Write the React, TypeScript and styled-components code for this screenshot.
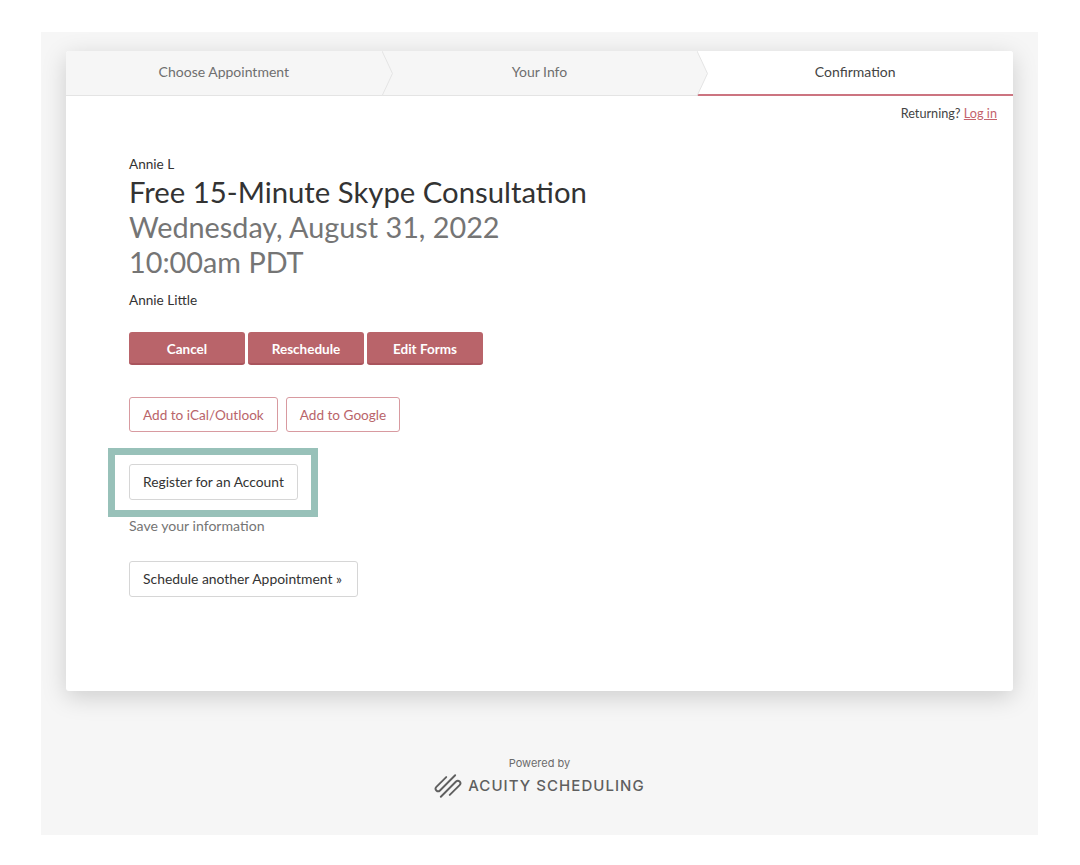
import React from "react";
import styled, { createGlobalStyle } from "styled-components";

const Global = createGlobalStyle`
  html, body { margin: 0; padding: 0; background: #fff; }
  body { font-family: "Lato", "Noto Sans", sans-serif; color: #333; }
`;
const Page = styled.div`
  height: 865px; box-sizing: border-box; padding: 32px 42px 30px 41px; overflow: hidden;
`;
const Panel = styled.main`
  height: 803px; box-sizing: border-box; background: #f6f6f6; padding: 19px 25px 0;
  display: flex; flex-direction: column;
`;
const Card = styled.section`
  height: 640px; background: #fff; border-radius: 3px; box-shadow: 0 6px 24px rgba(0,0,0,.17);
  display: flex; flex-direction: column; flex: none;
`;
const Tabs = styled.nav`
  display: grid; grid-template-columns: repeat(3, 1fr); height: 45px; flex: none;
`;
const Tab = styled.div<{ $active?: boolean }>`
  position: relative; display: flex; align-items: center; justify-content: center;
  font-size: 14px; padding-bottom: ${p => (p.$active ? "3px" : "4px")}; box-sizing: border-box;
  background: ${p => (p.$active ? "#fff" : "#f6f6f6")};
  color: ${p => (p.$active ? "#444" : "#6f6f6f")};
  border-bottom: ${p => (p.$active ? "2px solid #cc7480" : "1px solid #e4e4e4")};
  border-radius: ${p => (p.$active ? "0 3px 0 0" : "0")};
  &:first-child { border-radius: 3px 0 0 0; }
`;
const Chevron = styled.svg`
  position: absolute; right: -11px; top: 0; width: 11px; height: 45px; z-index: 1;
`;
const Returning = styled.div`
  align-self: flex-end; margin: 9px 16px 0 0; font-size: 12.7px; line-height: 16px; color: #444;
`;
const LogIn = styled.a`
  color: #c4636d; text-decoration: underline;
`;
const Content = styled.div`
  padding: 35px 0 0 63px; display: flex; flex-direction: column; align-items: flex-start;
`;
const Small = styled.div`
  font-size: 13.6px; line-height: 16px; color: #333;
`;
const Title = styled.h1`
  margin: 2px 0 0; font-size: 29.3px; line-height: 36px; font-weight: 400; color: #333;
`;
const Subtitle = styled.div`
  font-size: 28.8px; line-height: 35px; color: #757575;
`;
const Owner = styled(Small)`
  margin-top: 12px;
`;
const Row = styled.div<{ $gap: number; $top: number }>`
  display: flex; gap: ${p => p.$gap}px; margin-top: ${p => p.$top}px;
`;
const Solid = styled.button`
  min-width: 116px; height: 33px; padding: 3px 23px 0; box-sizing: border-box; background: #b9646a; color: #fff;
  border: 0; border-bottom: 2px solid #a9545c; border-radius: 3px; font: 700 13.5px "Lato", sans-serif;
`;
const Outline = styled.button`
  height: 35px; padding: 0 13px; box-sizing: border-box; background: #fff; color: #b9646a;
  border: 1px solid #d89aa0; border-radius: 3px; font: 400 13.6px "Lato", sans-serif;
`;
const Plain = styled.button`
  height: 36px; padding: 0 13px 2px; box-sizing: border-box; background: #fff; color: #333;
  border: 1px solid #d6d6d6; border-radius: 3px; font: 400 13.8px "Lato", sans-serif;
`;
const RegisterWrap = styled.div`
  position: relative; margin-top: 32px;
`;
const Highlight = styled.div`
  position: absolute; left: -21px; top: -16px; width: 210px; height: 69px; box-sizing: border-box;
  border: 7px solid #98c1b9; pointer-events: none;
`;
const Hint = styled.div`
  margin-top: 17px; font-size: 14.1px; line-height: 17px; color: #757575;
`;
const Another = styled(Plain)`
  margin-top: 27px; padding: 0 15px 2px 13px; font-size: 13.9px;
`;
const Footer = styled.footer`
  margin-top: 65px; display: flex; flex-direction: column; align-items: center; color: #666;
  font-family: "Inter", "Liberation Sans", sans-serif;
`;
const Powered = styled.div`
  font-size: 11px; line-height: 14px; color: #6b6b6b;
`;
const Brand = styled.div`
  display: flex; align-items: center; gap: 6px; margin-top: 4px;
  font-size: 15px; line-height: 22px; letter-spacing: 1.05px; font-weight: 500; color: #5f5f5f;
`;

const ChevronMark = () => (
  <Chevron viewBox="0 0 11 45">
    <path d="M0 0 L10.5 22.5 L0 45 Z" fill="#f6f6f6" stroke="none" />
    <path d="M0 0 L10.5 22.5 L0 45" fill="none" stroke="#e4e4e4" />
  </Chevron>
);

const Logo = () => (
  <svg width="28" height="24" viewBox="-10.5 -9.5 21 19" fill="none" stroke="#5f5f5f" strokeWidth="1.5" strokeLinecap="round" strokeLinejoin="round">
    <g transform="rotate(-45)">
      <path d="M4 -6 H-7 A2 2 0 0 0 -7 -2 H10" />
      <path d="M-4 6 H7 A2 2 0 0 0 7 2 H-10" />
    </g>
  </svg>
);

export default function App() {
  return (
    <>
      <Global />
      <Page>
        <Panel>
          <Card>
            <Tabs>
              <Tab>Choose Appointment<ChevronMark /></Tab>
              <Tab>Your Info<ChevronMark /></Tab>
              <Tab $active>Confirmation</Tab>
            </Tabs>
            <Returning>Returning? <LogIn>Log in</LogIn></Returning>
            <Content>
              <Small>Annie L</Small>
              <Title>Free 15-Minute Skype Consultation</Title>
              <Subtitle>Wednesday, August 31, 2022</Subtitle>
              <Subtitle>10:00am PDT</Subtitle>
              <Owner>Annie Little</Owner>
              <Row $gap={3} $top={24}>
                <Solid>Cancel</Solid>
                <Solid>Reschedule</Solid>
                <Solid>Edit Forms</Solid>
              </Row>
              <Row $gap={8} $top={32}>
                <Outline>Add to iCal/Outlook</Outline>
                <Outline>Add to Google</Outline>
              </Row>
              <RegisterWrap>
                <Plain>Register for an Account</Plain>
                <Highlight />
              </RegisterWrap>
              <Hint>Save your information</Hint>
              <Another>Schedule another Appointment »</Another>
            </Content>
          </Card>
          <Footer>
            <Powered>Powered by</Powered>
            <Brand><Logo />ACUITY SCHEDULING</Brand>
          </Footer>
        </Panel>
      </Page>
    </>
  );
}
